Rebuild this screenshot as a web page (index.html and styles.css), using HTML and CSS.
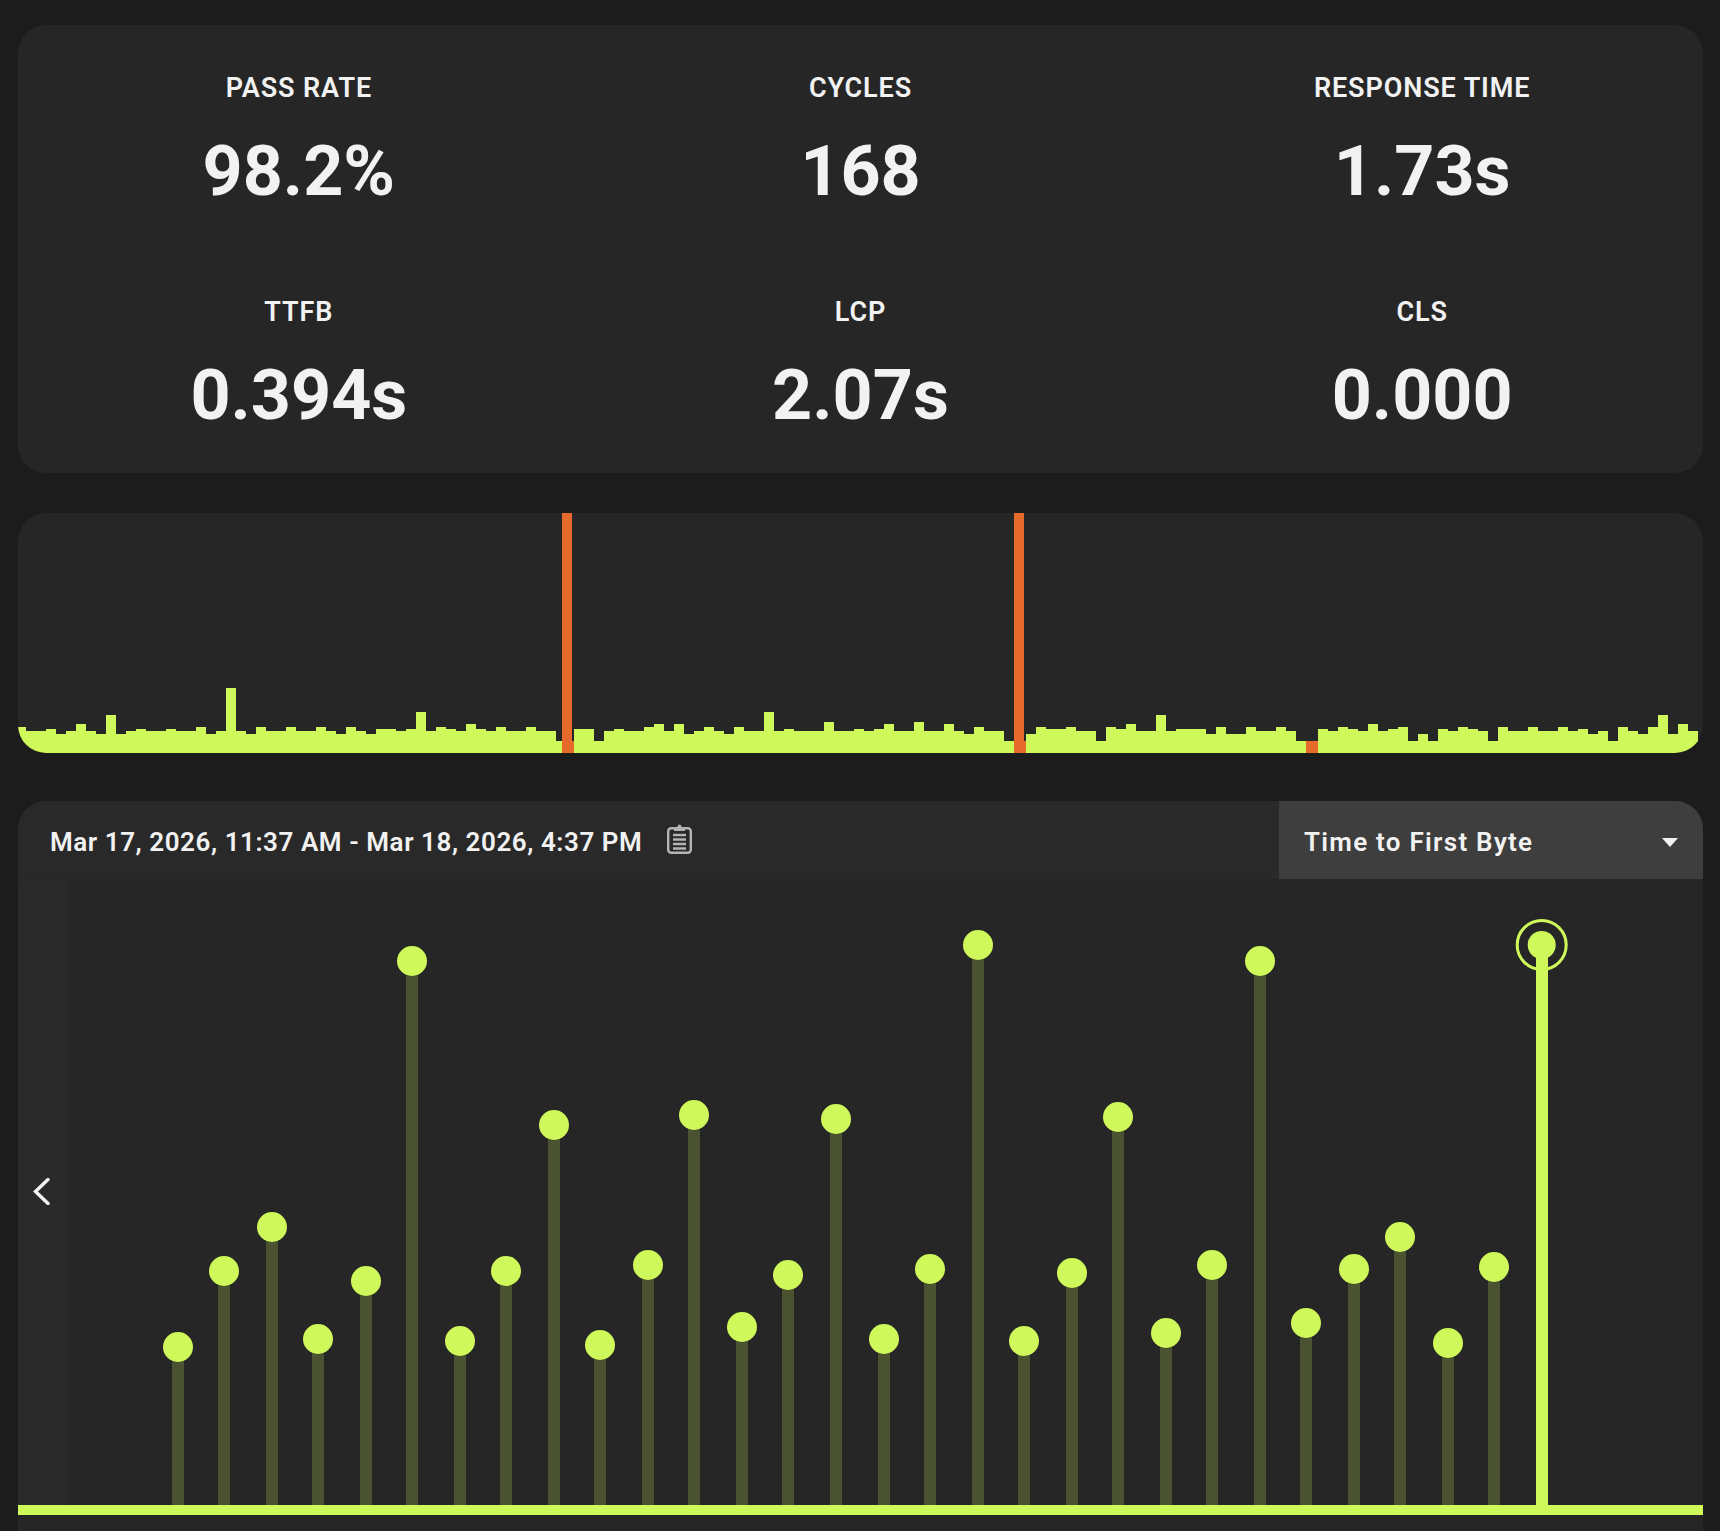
FILE: index.html
```html
<!DOCTYPE html>
<html lang="en">
<head>
<meta charset="utf-8">
<title>Monitor</title>
<link rel="stylesheet" href="styles.css">
</head>
<body>
<main class="page">
  <section class="card stats">
    <div class="stat"><div class="stat-label">PASS RATE</div><div class="stat-value">98.2%</div></div>
    <div class="stat"><div class="stat-label">CYCLES</div><div class="stat-value">168</div></div>
    <div class="stat"><div class="stat-label">RESPONSE TIME</div><div class="stat-value">1.73s</div></div>
    <div class="stat"><div class="stat-label">TTFB</div><div class="stat-value">0.394s</div></div>
    <div class="stat"><div class="stat-label">LCP</div><div class="stat-value">2.07s</div></div>
    <div class="stat"><div class="stat-label">CLS</div><div class="stat-value">0.000</div></div>
  </section>

  <section class="card timeline">
    <div class="bars">
      <i style="height:26px"></i><i style="height:22px"></i><i style="height:22px"></i><i style="height:24px"></i><i style="height:19px"></i><i style="height:22px"></i><i style="height:29px"></i><i style="height:22px"></i><i style="height:19px"></i><i style="height:38px"></i><i style="height:19px"></i><i style="height:22px"></i><i style="height:24px"></i><i style="height:22px"></i><i style="height:22px"></i><i style="height:24px"></i><i style="height:22px"></i><i style="height:22px"></i><i style="height:26px"></i><i style="height:19px"></i><i style="height:22px"></i><i style="height:65px"></i><i style="height:22px"></i><i style="height:19px"></i><i style="height:26px"></i><i style="height:22px"></i><i style="height:22px"></i><i style="height:26px"></i><i style="height:22px"></i><i style="height:22px"></i><i style="height:26px"></i><i style="height:22px"></i><i style="height:19px"></i><i style="height:26px"></i><i style="height:22px"></i><i style="height:19px"></i><i style="height:24px"></i><i style="height:24px"></i><i style="height:22px"></i><i style="height:24px"></i><i style="height:41px"></i><i style="height:22px"></i><i style="height:26px"></i><i style="height:24px"></i><i style="height:22px"></i><i style="height:29px"></i><i style="height:24px"></i><i style="height:22px"></i><i style="height:26px"></i><i style="height:22px"></i><i style="height:22px"></i><i style="height:26px"></i><i style="height:22px"></i><i style="height:22px"></i><i class="cut" style="height:12px"></i><b class="fail tall"></b><i style="height:24px"></i><i style="height:24px"></i><i style="height:12px"></i><i style="height:22px"></i><i style="height:24px"></i><i style="height:22px"></i><i style="height:22px"></i><i style="height:26px"></i><i style="height:29px"></i><i style="height:22px"></i><i style="height:29px"></i><i style="height:19px"></i><i style="height:22px"></i><i style="height:26px"></i><i style="height:22px"></i><i style="height:19px"></i><i style="height:26px"></i><i style="height:22px"></i><i style="height:22px"></i><i style="height:41px"></i><i style="height:22px"></i><i style="height:24px"></i><i style="height:22px"></i><i style="height:22px"></i><i style="height:22px"></i><i style="height:31px"></i><i style="height:22px"></i><i style="height:22px"></i><i style="height:24px"></i><i style="height:22px"></i><i style="height:24px"></i><i style="height:29px"></i><i style="height:22px"></i><i style="height:22px"></i><i style="height:31px"></i><i style="height:22px"></i><i style="height:22px"></i><i style="height:29px"></i><i style="height:22px"></i><i style="height:19px"></i><i style="height:26px"></i><i style="height:22px"></i><i style="height:22px"></i><i style="height:12px"></i><b class="fail tall"></b><i style="height:19px"></i><i style="height:26px"></i><i style="height:24px"></i><i style="height:24px"></i><i style="height:26px"></i><i style="height:22px"></i><i style="height:22px"></i><i style="height:12px"></i><i style="height:26px"></i><i style="height:24px"></i><i style="height:29px"></i><i style="height:22px"></i><i style="height:22px"></i><i style="height:38px"></i><i style="height:22px"></i><i style="height:24px"></i><i style="height:24px"></i><i style="height:24px"></i><i style="height:19px"></i><i style="height:26px"></i><i style="height:19px"></i><i style="height:19px"></i><i style="height:26px"></i><i style="height:22px"></i><i style="height:22px"></i><i style="height:26px"></i><i style="height:22px"></i><i style="height:12px"></i><b class="fail"></b><i style="height:24px"></i><i style="height:22px"></i><i style="height:26px"></i><i style="height:24px"></i><i style="height:22px"></i><i style="height:29px"></i><i style="height:22px"></i><i style="height:24px"></i><i style="height:26px"></i><i style="height:12px"></i><i style="height:19px"></i><i style="height:12px"></i><i style="height:24px"></i><i style="height:22px"></i><i style="height:26px"></i><i style="height:24px"></i><i style="height:22px"></i><i style="height:12px"></i><i style="height:26px"></i><i style="height:22px"></i><i style="height:22px"></i><i style="height:26px"></i><i style="height:22px"></i><i style="height:22px"></i><i style="height:26px"></i><i style="height:22px"></i><i style="height:24px"></i><i style="height:19px"></i><i style="height:22px"></i><i style="height:12px"></i><i style="height:26px"></i><i style="height:22px"></i><i style="height:19px"></i><i style="height:26px"></i><i style="height:38px"></i><i style="height:19px"></i><i style="height:29px"></i><i style="height:22px"></i>
    </div>
  </section>

  <section class="card detail">
    <header class="detail-head">
      <div class="range">
        <span class="range-text">Mar 17, 2026, 11:37 AM - Mar 18, 2026, 4:37 PM</span>
        <svg class="clip-icon" viewBox="0 0 25 30" aria-hidden="true">
          <path class="clip-top" d="M7 3.5h3.2C10.6 1.6 11.4.6 12.5.6s1.9 1 2.3 2.9H18v3.4H7z"/>
          <rect class="clip-body" x="1.2" y="4.2" width="22.6" height="24.6" rx="3"/>
          <path class="clip-lines" d="M6 11h13M6 15.5h13M6 20h13M6 24.5h13"/>
        </svg>
      </div>
      <div class="metric-select">
        <span class="metric-name">Time to First Byte</span>
        <svg class="caret" viewBox="0 0 16 9" aria-hidden="true"><path d="M0 0h16L8 9z"/></svg>
      </div>
    </header>
    <div class="chart">
      <div class="pager">
        <svg class="chevron" viewBox="0 0 17 27" aria-hidden="true"><path d="M15 1.5 2.5 13.5 15 25.5"/></svg>
      </div>
      <svg class="plot" viewBox="18 879 1685 652" aria-hidden="true">
        <g class="stems">
          <rect x="172" y="1347" width="12" height="158"/><rect x="218" y="1271" width="12" height="234"/><rect x="266" y="1227" width="12" height="278"/><rect x="312" y="1339" width="12" height="166"/><rect x="360" y="1281" width="12" height="224"/><rect x="406" y="961" width="12" height="544"/><rect x="454" y="1341" width="12" height="164"/><rect x="500" y="1271" width="12" height="234"/><rect x="548" y="1125" width="12" height="380"/><rect x="594" y="1345" width="12" height="160"/><rect x="642" y="1265" width="12" height="240"/><rect x="688" y="1115" width="12" height="390"/><rect x="736" y="1327" width="12" height="178"/><rect x="782" y="1275" width="12" height="230"/><rect x="830" y="1119" width="12" height="386"/><rect x="878" y="1339" width="12" height="166"/><rect x="924" y="1269" width="12" height="236"/><rect x="972" y="945" width="12" height="560"/><rect x="1018" y="1341" width="12" height="164"/><rect x="1066" y="1273" width="12" height="232"/><rect x="1112" y="1117" width="12" height="388"/><rect x="1160" y="1333" width="12" height="172"/><rect x="1206" y="1265" width="12" height="240"/><rect x="1254" y="961" width="12" height="544"/><rect x="1300" y="1323" width="12" height="182"/><rect x="1348" y="1269" width="12" height="236"/><rect x="1394" y="1237" width="12" height="268"/><rect x="1442" y="1343" width="12" height="162"/><rect x="1488" y="1267" width="12" height="238"/>
        </g>
        <g class="lime">
          <circle cx="178" cy="1347" r="15"/><circle cx="224" cy="1271" r="15"/><circle cx="272" cy="1227" r="15"/><circle cx="318" cy="1339" r="15"/><circle cx="366" cy="1281" r="15"/><circle cx="412" cy="961" r="15"/><circle cx="460" cy="1341" r="15"/><circle cx="506" cy="1271" r="15"/><circle cx="554" cy="1125" r="15"/><circle cx="600" cy="1345" r="15"/><circle cx="648" cy="1265" r="15"/><circle cx="694" cy="1115" r="15"/><circle cx="742" cy="1327" r="15"/><circle cx="788" cy="1275" r="15"/><circle cx="836" cy="1119" r="15"/><circle cx="884" cy="1339" r="15"/><circle cx="930" cy="1269" r="15"/><circle cx="978" cy="945" r="15"/><circle cx="1024" cy="1341" r="15"/><circle cx="1072" cy="1273" r="15"/><circle cx="1118" cy="1117" r="15"/><circle cx="1166" cy="1333" r="15"/><circle cx="1212" cy="1265" r="15"/><circle cx="1260" cy="961" r="15"/><circle cx="1306" cy="1323" r="15"/><circle cx="1354" cy="1269" r="15"/><circle cx="1400" cy="1237" r="15"/><circle cx="1448" cy="1343" r="15"/><circle cx="1494" cy="1267" r="15"/>
          <rect x="1536" y="945" width="12" height="560"/>
          <circle cx="1541.7" cy="945" r="14"/>
          <rect x="18" y="1505" width="1685" height="10"/>
        </g>
        <circle class="ring" cx="1541.7" cy="945" r="24.5"/>
      </svg>
    </div>
  </section>
</main>
</body>
</html>
```
FILE: styles.css
```css
* { box-sizing: border-box; }

html, body {
  margin: 0;
  height: 1531px;
  overflow: hidden;
  background: #1c1c1c;
}

body {
  font-family: "Roboto", "Liberation Sans", sans-serif;
  color: #f2f2f2;
}

.page {
  display: flex;
  flex-direction: column;
  padding: 25px 17px 0 18px;
}

.card {
  background: #262626;
  border-radius: 28px;
  overflow: hidden;
}

.stats {
  display: grid;
  grid-template-columns: repeat(3, 1fr);
  grid-auto-rows: 224px;
}

.stat {
  display: flex;
  flex-direction: column;
  align-items: center;
  padding-top: 46px;
}

.stat-label {
  font-size: 27px;
  font-weight: 600;
  line-height: 34px;
  letter-spacing: .9px;
}

.stat-value {
  margin-top: 24px;
  font-size: 70px;
  font-weight: 700;
  line-height: 84px;
}

.timeline {
  margin-top: 40px;
  height: 240px;
  position: relative;
}

.bars {
  display: flex;
  align-items: flex-end;
  height: 100%;
  margin-left: -2px;
}

.bars i {
  flex: none;
  display: block;
  width: 10px;
  background: #cff95a;
}

.bars i.cut { width: 6px; }

.bars b {
  flex: none;
  display: block;
  position: relative;
  width: 12px;
  height: 12px;
  background: #e56a2c;
}

.bars b.tall::before {
  content: "";
  position: absolute;
  left: 0;
  bottom: 0;
  width: 10px;
  height: 240px;
  background: #e56a2c;
}

.detail {
  margin-top: 48px;
  height: 730px;
  border-radius: 28px 28px 0 0;
}

.detail-head {
  display: flex;
  justify-content: space-between;
  height: 78px;
  background: #292929;
}

.range {
  display: flex;
  align-items: center;
  padding-left: 32px;
  gap: 25px;
}

.range-text {
  padding-top: 4px;
  font-size: 26px;
  font-weight: 600;
  letter-spacing: .56px;
}

.clip-icon {
  width: 25px;
  height: 30px;
  margin-top: -2px;
}

.clip-top { fill: #b4b4b4; }
.clip-body { fill: none; stroke: #b4b4b4; stroke-width: 2.4; }
.clip-lines { fill: none; stroke: #b4b4b4; stroke-width: 2.4; }

.metric-select {
  display: flex;
  align-items: center;
  justify-content: space-between;
  width: 424px;
  padding: 0 25px;
  background: #3e3e3e;
}

.metric-name {
  padding-top: 4px;
  font-size: 26px;
  font-weight: 600;
  letter-spacing: 1.27px;
}

.caret {
  width: 16px;
  height: 9px;
  fill: #f2f2f2;
  margin-top: 4px;
}

.chart {
  position: relative;
  height: 652px;
}

.plot {
  display: block;
  width: 1685px;
  height: 652px;
}

.pager {
  position: absolute;
  left: 0;
  top: 2px;
  bottom: 26px;
  width: 50px;
  background: #2a2a2a;
  display: flex;
  align-items: center;
  justify-content: center;
  padding: 0 4px 4px 0;
}

.chevron {
  width: 17px;
  height: 27px;
  fill: none;
  stroke: #f2f2f2;
  stroke-width: 3.4;
  stroke-linecap: round;
  stroke-linejoin: miter;
}

.stems { fill: #4a5230; }
.lime { fill: #cff95a; }
.ring { fill: none; stroke: #cff95a; stroke-width: 3; }
```
